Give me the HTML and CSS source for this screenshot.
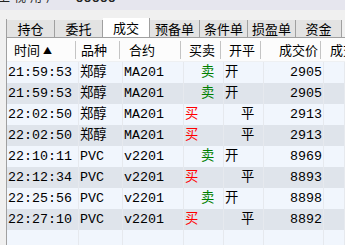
FILE: index.html
```html
<!DOCTYPE html>
<html>
<head>
<meta charset="utf-8">
<link rel="stylesheet" href="styles.css">
</head>
<body>
<div class="topbar"><span class="tb-a">上视用户</span><span class="tb-b">88888</span></div>
<div class="tabs">
  <div class="tab w48">持仓</div>
  <div class="tab w48">委托</div>
  <div class="tab w47 active">成交</div>
  <div class="tab w50">预备单</div>
  <div class="tab w48">条件单</div>
  <div class="tab w48">损盈单</div>
  <div class="tab w46">资金</div>
</div>
<div class="grid">
  <div class="row head">
    <div class="c c1 h1">时间 <span class="arrow">▲</span></div>
    <div class="c c2 h2">品种</div>
    <div class="c c3 h3">合约</div>
    <div class="c c4 h4">买卖</div>
    <div class="c c5 h5">开平</div>
    <div class="c c6 h6">成交价</div>
    <div class="c c7 h7">成交</div>
  </div>
  <div class="row odd"><div class="c c1">21:59:53</div><div class="c c2">郑醇</div><div class="c c3">MA201</div><div class="c c4 sell">  卖</div><div class="c c5">开</div><div class="c c6">2905</div><div class="c c7"></div></div>
  <div class="row even"><div class="c c1">21:59:53</div><div class="c c2">郑醇</div><div class="c c3">MA201</div><div class="c c4 sell">  卖</div><div class="c c5">开</div><div class="c c6">2905</div><div class="c c7"></div></div>
  <div class="row odd"><div class="c c1">22:02:50</div><div class="c c2">郑醇</div><div class="c c3">MA201</div><div class="c c4 buy">买</div><div class="c c5">  平</div><div class="c c6">2913</div><div class="c c7"></div></div>
  <div class="row even"><div class="c c1">22:02:50</div><div class="c c2">郑醇</div><div class="c c3">MA201</div><div class="c c4 buy">买</div><div class="c c5">  平</div><div class="c c6">2913</div><div class="c c7"></div></div>
  <div class="row odd"><div class="c c1">22:10:11</div><div class="c c2">PVC</div><div class="c c3">v2201</div><div class="c c4 sell">  卖</div><div class="c c5">开</div><div class="c c6">8969</div><div class="c c7"></div></div>
  <div class="row even"><div class="c c1">22:12:34</div><div class="c c2">PVC</div><div class="c c3">v2201</div><div class="c c4 buy">买</div><div class="c c5">  平</div><div class="c c6">8893</div><div class="c c7"></div></div>
  <div class="row odd"><div class="c c1">22:25:56</div><div class="c c2">PVC</div><div class="c c3">v2201</div><div class="c c4 sell">  卖</div><div class="c c5">开</div><div class="c c6">8898</div><div class="c c7"></div></div>
  <div class="row even"><div class="c c1">22:27:10</div><div class="c c2">PVC</div><div class="c c3">v2201</div><div class="c c4 buy">买</div><div class="c c5">  平</div><div class="c c6">8892</div><div class="c c7"></div></div>
  <div class="row odd"><div class="c c1"></div><div class="c c2"></div><div class="c c3"></div><div class="c c4"></div><div class="c c5"></div><div class="c c6"></div><div class="c c7"></div></div>
</div>
</body>
</html>
```
FILE: styles.css
```css
html, body {
  margin: 0;
  padding: 0;
}
body {
  width: 345px;
  height: 245px;
  overflow: hidden;
  background: #f0f0f0;
  font-family: "Noto Sans CJK SC", sans-serif;
}
.topbar {
  height: 10px;
  background: #e6e6ee;
  overflow: hidden;
  display: flex;
  font-size: 12px;
  line-height: 12px;
  color: #222;
}
.tb-a {
  margin-top: -9px;
  margin-left: -2px;
  letter-spacing: 4px;
}
.tb-b {
  margin-top: -9px;
  margin-left: 14px;
  font-weight: bold;
  letter-spacing: 1px;
}
.tabs {
  display: flex;
  align-items: flex-end;
  margin-top: 9px;
  margin-left: 6px;
  height: 18px;
  border-left: 1px solid #a0a0a0;
}
.tab {
  height: 17px;
  box-sizing: border-box;
  background: #e3e3e3;
  border-right: 1px solid #a0a0a0;
  font-size: 13px;
  line-height: 17px;
  text-align: center;
  color: #000;
}
.tab.active {
  height: 19px;
  margin-top: -2px;
  background: #ffffff;
  line-height: 19px;
}
.w46 { width: 46px; }
.w47 { width: 47px; }
.w48 { width: 48px; }
.w50 { width: 50px; }
.grid {
  margin-left: 6px;
  border-left: 1px solid #a0a0a0;
  border-top: 1px solid #a0a0a0;
  overflow: hidden;
}
.row {
  display: flex;
  height: 21px;
  font-family: "Liberation Mono", "Noto Sans CJK SC", monospace;
  font-size: 13.33px;
  line-height: 21px;
  color: #000;
  white-space: pre;
}
.row.odd { background: #f1f6fd; }
.row.even { background: #dfe4eb; }
.c {
  box-sizing: border-box;
  border-right: 1px solid #e6e9ee;
  padding-left: 1px;
  overflow: hidden;
  flex: none;
}
.c1 { width: 72px; }
.c2 { width: 44px; }
.c3 { width: 61px; }
.c4 { width: 40px; }
.c5 { width: 40px; }
.c6 { width: 60px; text-align: right; padding-right: 1px; }
.c7 { flex: 1 1 auto; width: auto; min-width: 0; }
.sell { color: #008000; }
.buy { color: #ff0000; }
.row.head {
  height: 23px;
  line-height: 23px;
  background: #fcfcfc;
  font-family: "Noto Sans CJK SC", sans-serif;
  font-size: 13px;
  border-bottom: 1px solid #eef0f2;
}
.head .c {
  border-right: none;
  background: linear-gradient(#c4c4c4, #c4c4c4) right 3px top 3px / 1px 18px no-repeat;
}
.head .c7 { background: none; }
.h1 { padding-left: 7px; }
.h2 { padding-left: 2px; }
.h3 { padding-left: 6px; }
.h4 { padding-left: 5px; }
.h5 { padding-left: 5px; }
.h6 { padding-right: 6px; }
.h7 { padding-left: 6px; }
.arrow {
  font-size: 9px;
  vertical-align: 1px;
}
```
